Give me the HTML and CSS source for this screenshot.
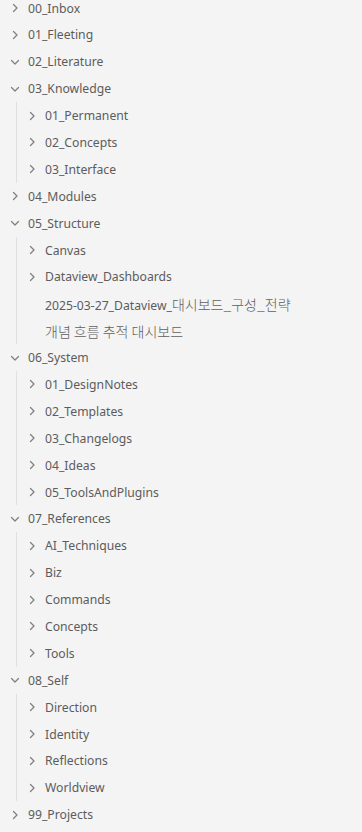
FILE: index.html
```html
<!DOCTYPE html>
<html lang="en">
<head>
  <meta charset="UTF-8">
  <meta name="viewport" content="width=device-width, initial-scale=1.0">
  <title>File Explorer</title>
  <link rel="stylesheet" href="styles.css">
</head>
<body>
  <!-- Folder tree -->
  <div class="tree">
    <div class="item"><svg class="chevron" viewBox="0 0 16 16"><path d="M6.5 4.5l3.5 3.5-3.5 3.5"/></svg><span class="name">00_Inbox</span></div>
    <div class="item"><svg class="chevron" viewBox="0 0 16 16"><path d="M6.5 4.5l3.5 3.5-3.5 3.5"/></svg><span class="name">01_Fleeting</span></div>
    <div class="item"><svg class="chevron" viewBox="0 0 16 16"><path d="M4.5 6.5l3.5 3.5 3.5-3.5"/></svg><span class="name">02_Literature</span></div>

    <div class="item"><svg class="chevron" viewBox="0 0 16 16"><path d="M4.5 6.5l3.5 3.5 3.5-3.5"/></svg><span class="name">03_Knowledge</span></div>
    <div class="children">
      <div class="item"><svg class="chevron" viewBox="0 0 16 16"><path d="M6.5 4.5l3.5 3.5-3.5 3.5"/></svg><span class="name">01_Permanent</span></div>
      <div class="item"><svg class="chevron" viewBox="0 0 16 16"><path d="M6.5 4.5l3.5 3.5-3.5 3.5"/></svg><span class="name">02_Concepts</span></div>
      <div class="item"><svg class="chevron" viewBox="0 0 16 16"><path d="M6.5 4.5l3.5 3.5-3.5 3.5"/></svg><span class="name">03_Interface</span></div>
    </div>

    <div class="item"><svg class="chevron" viewBox="0 0 16 16"><path d="M6.5 4.5l3.5 3.5-3.5 3.5"/></svg><span class="name">04_Modules</span></div>

    <div class="item"><svg class="chevron" viewBox="0 0 16 16"><path d="M4.5 6.5l3.5 3.5 3.5-3.5"/></svg><span class="name">05_Structure</span></div>
    <div class="children">
      <div class="item"><svg class="chevron" viewBox="0 0 16 16"><path d="M6.5 4.5l3.5 3.5-3.5 3.5"/></svg><span class="name">Canvas</span></div>
      <div class="item"><svg class="chevron" viewBox="0 0 16 16"><path d="M6.5 4.5l3.5 3.5-3.5 3.5"/></svg><span class="name">Dataview_Dashboards</span></div>
      <div class="item file"><span class="spacer"></span><span class="name">2025-03-27_Dataview_<span class="ko">대시보드_구성_전략</span></span></div>
      <div class="item file"><span class="spacer"></span><span class="name ko">개념 흐름 추적 대시보드</span></div>
    </div>

    <div class="item"><svg class="chevron" viewBox="0 0 16 16"><path d="M4.5 6.5l3.5 3.5 3.5-3.5"/></svg><span class="name">06_System</span></div>
    <div class="children">
      <div class="item"><svg class="chevron" viewBox="0 0 16 16"><path d="M6.5 4.5l3.5 3.5-3.5 3.5"/></svg><span class="name">01_DesignNotes</span></div>
      <div class="item"><svg class="chevron" viewBox="0 0 16 16"><path d="M6.5 4.5l3.5 3.5-3.5 3.5"/></svg><span class="name">02_Templates</span></div>
      <div class="item"><svg class="chevron" viewBox="0 0 16 16"><path d="M6.5 4.5l3.5 3.5-3.5 3.5"/></svg><span class="name">03_Changelogs</span></div>
      <div class="item"><svg class="chevron" viewBox="0 0 16 16"><path d="M6.5 4.5l3.5 3.5-3.5 3.5"/></svg><span class="name">04_Ideas</span></div>
      <div class="item"><svg class="chevron" viewBox="0 0 16 16"><path d="M6.5 4.5l3.5 3.5-3.5 3.5"/></svg><span class="name">05_ToolsAndPlugins</span></div>
    </div>

    <div class="item"><svg class="chevron" viewBox="0 0 16 16"><path d="M4.5 6.5l3.5 3.5 3.5-3.5"/></svg><span class="name">07_References</span></div>
    <div class="children">
      <div class="item"><svg class="chevron" viewBox="0 0 16 16"><path d="M6.5 4.5l3.5 3.5-3.5 3.5"/></svg><span class="name">AI_Techniques</span></div>
      <div class="item"><svg class="chevron" viewBox="0 0 16 16"><path d="M6.5 4.5l3.5 3.5-3.5 3.5"/></svg><span class="name">Biz</span></div>
      <div class="item"><svg class="chevron" viewBox="0 0 16 16"><path d="M6.5 4.5l3.5 3.5-3.5 3.5"/></svg><span class="name">Commands</span></div>
      <div class="item"><svg class="chevron" viewBox="0 0 16 16"><path d="M6.5 4.5l3.5 3.5-3.5 3.5"/></svg><span class="name">Concepts</span></div>
      <div class="item"><svg class="chevron" viewBox="0 0 16 16"><path d="M6.5 4.5l3.5 3.5-3.5 3.5"/></svg><span class="name">Tools</span></div>
    </div>

    <div class="item"><svg class="chevron" viewBox="0 0 16 16"><path d="M4.5 6.5l3.5 3.5 3.5-3.5"/></svg><span class="name">08_Self</span></div>
    <div class="children">
      <div class="item"><svg class="chevron" viewBox="0 0 16 16"><path d="M6.5 4.5l3.5 3.5-3.5 3.5"/></svg><span class="name">Direction</span></div>
      <div class="item"><svg class="chevron" viewBox="0 0 16 16"><path d="M6.5 4.5l3.5 3.5-3.5 3.5"/></svg><span class="name">Identity</span></div>
      <div class="item"><svg class="chevron" viewBox="0 0 16 16"><path d="M6.5 4.5l3.5 3.5-3.5 3.5"/></svg><span class="name">Reflections</span></div>
      <div class="item"><svg class="chevron" viewBox="0 0 16 16"><path d="M6.5 4.5l3.5 3.5-3.5 3.5"/></svg><span class="name">Worldview</span></div>
    </div>

    <div class="item"><svg class="chevron" viewBox="0 0 16 16"><path d="M6.5 4.5l3.5 3.5-3.5 3.5"/></svg><span class="name">99_Projects</span></div>
  </div>
</body>
</html>
```

FILE: styles.css
```css
body {
  margin: 0;
  background-color: #f4f4f4;
  font-family: "Noto Sans", "Noto Sans CJK KR", sans-serif;
  font-size: 12.2px;
  color: #5c5c5c;
  height: 100vh;
  overflow: hidden;
}

/* Tree is scrolled a little, first row is cut at the top */
.tree {
  margin-top: -5.45px;
}

/* One row: chevron + name */
.item {
  display: flex;
  align-items: center;
  height: 26.9px;
  padding-left: 7px;
  white-space: nowrap;
}

.chevron {
  width: 16px;
  height: 16px;
  flex-shrink: 0;
  margin-right: 5px;
}

.chevron path {
  fill: none;
  stroke: #808080;
  stroke-width: 1.3;
  stroke-linecap: round;
  stroke-linejoin: round;
}

/* Files have no chevron, keep the slot */
.spacer {
  width: 16px;
  margin-right: 5px;
  flex-shrink: 0;
}

/* Korean names run a bit wider, but look lighter */
.ko {
  font-family: "Noto Sans CJK KR", sans-serif;
  font-size: 14px;
  font-weight: 300;
  color: #606060;
}

/* Nested level with its guide line */
.children {
  margin-left: 16px;
  border-left: 1px solid #e0e0e0;
}
```
